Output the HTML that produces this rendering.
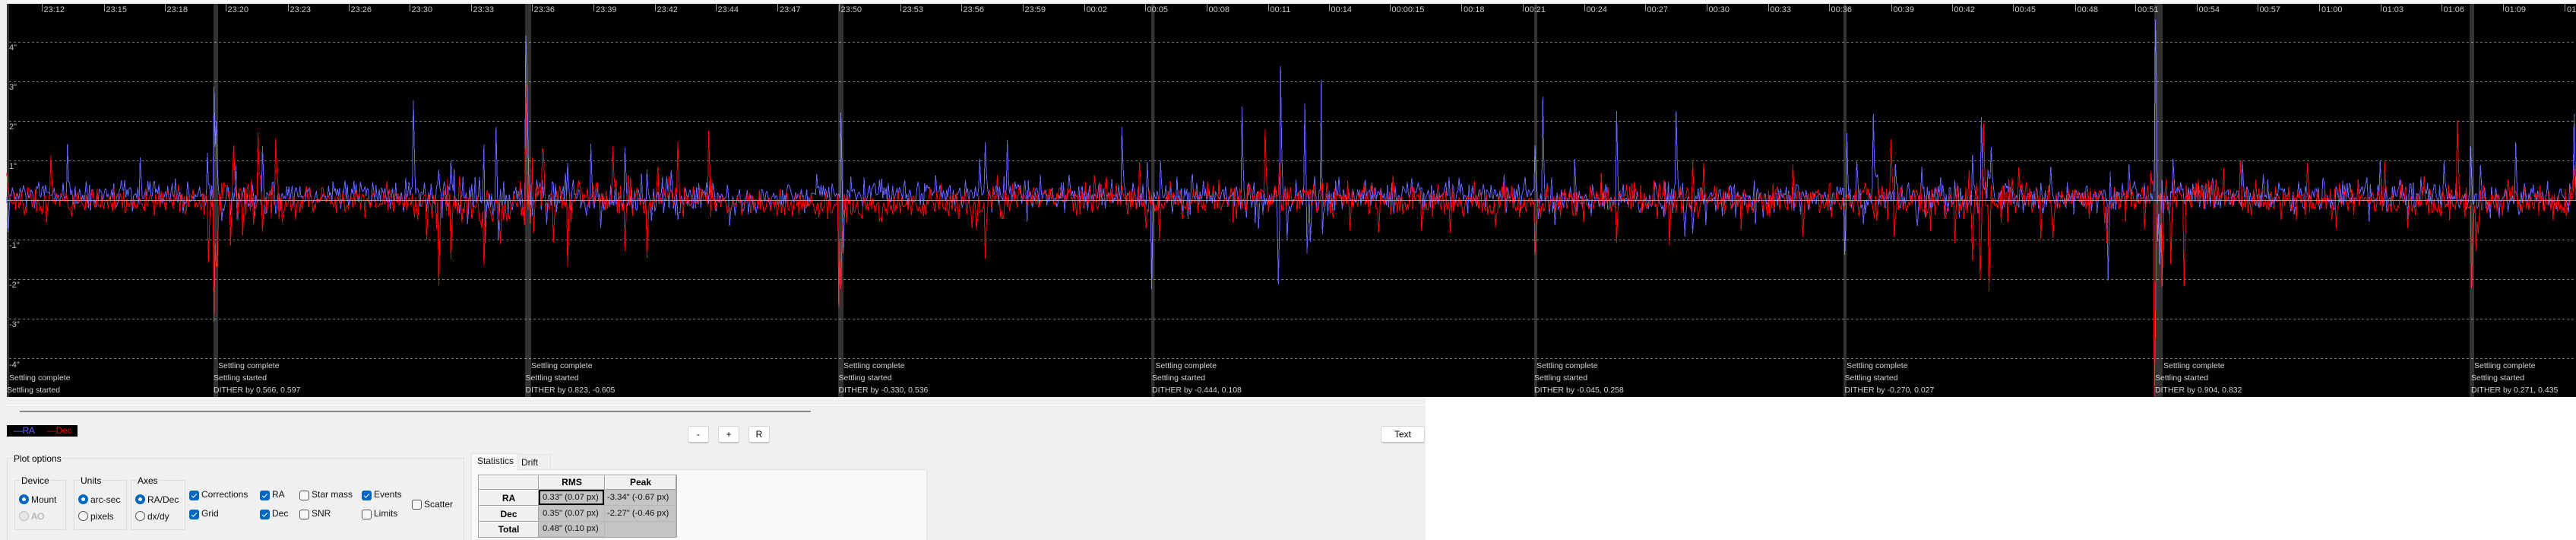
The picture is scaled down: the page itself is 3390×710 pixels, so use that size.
<!DOCTYPE html>
<html>
<head>
<meta charset="utf-8">
<title>Guide graph</title>
<style>
html,body{margin:0;padding:0;background:#fff;width:3390px;height:710px;overflow:hidden;}
body{font-family:"Liberation Sans",sans-serif;font-size:12px;color:#000;}
div,span{position:absolute;white-space:nowrap;box-sizing:border-box;}
#root{left:0;top:0;width:3390px;height:710px;overflow:hidden;background:#fff;}
#top{left:0;top:0;width:3390px;height:5px;background:#f8f8f8;}
#leftedge{left:0;top:0;width:9px;height:522px;background:#f0f0f0;}
#plot{left:9px;top:5px;width:3381px;height:517px;background:#000;}
#panel{left:0;top:522px;width:1876px;height:188px;background:#f0f0f0;}
svg{position:absolute;left:0;top:0;}
.t{top:7px;height:13px;line-height:13px;font-size:11px;color:#c8c8c8;}
.k{top:5px;width:1px;height:10px;background:#a0a0a0;}
.y{left:12px;height:13px;line-height:13px;font-size:11px;color:#c8c8c8;}
.e{height:13px;line-height:13px;font-size:10.5px;color:#d4d4d4;}
.btn{top:560px;height:23px;background:#fff;border:1px solid #d4d4d4;border-bottom:2px solid #c4c4c4;border-radius:3px;text-align:center;line-height:20px;font-size:12px;}
.grp{border:1px solid #dcdcdc;}
.lg{background:#f0f0f0;height:14px;line-height:14px;font-size:12px;padding:0 1px;}
.l{height:16px;line-height:16px;font-size:12px;color:#111;}
.cb{width:13px;height:13px;border-radius:3px;background:#0067c0;}
.cb svg{left:0;top:0;}
.cu{width:13px;height:13px;border-radius:3px;background:#f7f7f7;border:1px solid #555;}
.r{width:13px;height:13px;border-radius:50%;background:#0067c0;}
.r:after{content:"";position:absolute;left:4px;top:4px;width:5px;height:5px;border-radius:50%;background:#fff;}
.ru{width:13px;height:13px;border-radius:50%;background:#f5f5f5;border:1px solid #555;}
.hd{background:#f0f0f0;border-right:1px solid #a0a0a0;border-bottom:1px solid #a0a0a0;border-left:1px solid #fff;border-top:1px solid #fff;text-align:center;font-weight:bold;font-size:12px;}
.c{background:#c4c4c4;border-right:1px solid #b6b6b6;border-bottom:1px solid #b6b6b6;font-size:11.3px;color:#111;}
</style>
</head>
<body>
<div id="root">
<div id="top"></div>
<div id="leftedge"></div>
<div id="plot"></div>
<svg id="chart" width="3390" height="710" viewBox="0 0 3390 710"></svg>

<div class="k" style="left:55px"></div><div class="t" style="left:57.5px">23:12</div>
<div class="k" style="left:137px"></div><div class="t" style="left:139.5px">23:15</div>
<div class="k" style="left:217px"></div><div class="t" style="left:219.5px">23:18</div>
<div class="k" style="left:297px"></div><div class="t" style="left:299.5px">23:20</div>
<div class="k" style="left:379px"></div><div class="t" style="left:381.5px">23:23</div>
<div class="k" style="left:459px"></div><div class="t" style="left:461.5px">23:26</div>
<div class="k" style="left:539px"></div><div class="t" style="left:541.5px">23:30</div>
<div class="k" style="left:620px"></div><div class="t" style="left:622.5px">23:33</div>
<div class="k" style="left:700px"></div><div class="t" style="left:702.5px">23:36</div>
<div class="k" style="left:781px"></div><div class="t" style="left:784px">23:39</div>
<div class="k" style="left:862px"></div><div class="t" style="left:864.5px">23:42</div>
<div class="k" style="left:942px"></div><div class="t" style="left:944.5px">23:44</div>
<div class="k" style="left:1023px"></div><div class="t" style="left:1026px">23:47</div>
<div class="k" style="left:1104px"></div><div class="t" style="left:1106.5px">23:50</div>
<div class="k" style="left:1185px"></div><div class="t" style="left:1187.5px">23:53</div>
<div class="k" style="left:1265px"></div><div class="t" style="left:1267.5px">23:56</div>
<div class="k" style="left:1346px"></div><div class="t" style="left:1348.5px">23:59</div>
<div class="k" style="left:1427px"></div><div class="t" style="left:1429.5px">00:02</div>
<div class="k" style="left:1507px"></div><div class="t" style="left:1509.5px">00:05</div>
<div class="k" style="left:1588px"></div><div class="t" style="left:1590.5px">00:08</div>
<div class="k" style="left:1669px"></div><div class="t" style="left:1671.5px">00:11</div>
<div class="k" style="left:1749px"></div><div class="t" style="left:1751.5px">00:14</div>
<div class="k" style="left:1829px"></div><div class="t" style="left:1831.5px">00:00:15</div>
<div class="k" style="left:1923px"></div><div class="t" style="left:1926px">00:18</div>
<div class="k" style="left:2004px"></div><div class="t" style="left:2006.5px">00:21</div>
<div class="k" style="left:2085px"></div><div class="t" style="left:2087.5px">00:24</div>
<div class="k" style="left:2165px"></div><div class="t" style="left:2167.5px">00:27</div>
<div class="k" style="left:2246px"></div><div class="t" style="left:2248.5px">00:30</div>
<div class="k" style="left:2327px"></div><div class="t" style="left:2329.5px">00:33</div>
<div class="k" style="left:2407px"></div><div class="t" style="left:2409.5px">00:36</div>
<div class="k" style="left:2489px"></div><div class="t" style="left:2491.5px">00:39</div>
<div class="k" style="left:2569px"></div><div class="t" style="left:2571.5px">00:42</div>
<div class="k" style="left:2649px"></div><div class="t" style="left:2651.5px">00:45</div>
<div class="k" style="left:2731px"></div><div class="t" style="left:2733.5px">00:48</div>
<div class="k" style="left:2810px"></div><div class="t" style="left:2813px">00:51</div>
<div class="k" style="left:2891px"></div><div class="t" style="left:2893.5px">00:54</div>
<div class="k" style="left:2971px"></div><div class="t" style="left:2973.5px">00:57</div>
<div class="k" style="left:3052px"></div><div class="t" style="left:3055px">01:00</div>
<div class="k" style="left:3133px"></div><div class="t" style="left:3135.5px">01:03</div>
<div class="k" style="left:3213px"></div><div class="t" style="left:3215.5px">01:06</div>
<div class="k" style="left:3294px"></div><div class="t" style="left:3296.5px">01:09</div>
<div class="k" style="left:3375px"></div><div class="t" style="left:3378px">01:12</div>

<div class="y" style="top:57px">4"</div>
<div class="y" style="top:109px">3"</div>
<div class="y" style="top:161px">2"</div>
<div class="y" style="top:213px">1"</div>
<div class="y" style="top:317px">-1"</div>
<div class="y" style="top:369px">-2"</div>
<div class="y" style="top:421px">-3"</div>
<div class="y" style="top:474px">-4"</div>

<div class="e" style="left:12px;top:491px">Settling complete</div>
<div class="e" style="left:9px;top:507px">Settling started</div>
<div class="e" style="left:287px;top:475px">Settling complete</div>
<div class="e" style="left:281px;top:491px">Settling started</div>
<div class="e" style="left:281px;top:507px">DITHER by 0.566, 0.597</div>
<div class="e" style="left:699px;top:475px">Settling complete</div>
<div class="e" style="left:691.5px;top:491px">Settling started</div>
<div class="e" style="left:691.5px;top:507px">DITHER by 0.823, -0.605</div>
<div class="e" style="left:1110px;top:475px">Settling complete</div>
<div class="e" style="left:1103.5px;top:491px">Settling started</div>
<div class="e" style="left:1103.5px;top:507px">DITHER by -0.330, 0.536</div>
<div class="e" style="left:1520.5px;top:475px">Settling complete</div>
<div class="e" style="left:1516px;top:491px">Settling started</div>
<div class="e" style="left:1516px;top:507px">DITHER by -0.444, 0.108</div>
<div class="e" style="left:2022px;top:475px">Settling complete</div>
<div class="e" style="left:2019px;top:491px">Settling started</div>
<div class="e" style="left:2019px;top:507px">DITHER by -0.045, 0.258</div>
<div class="e" style="left:2430px;top:475px">Settling complete</div>
<div class="e" style="left:2427.5px;top:491px">Settling started</div>
<div class="e" style="left:2427.5px;top:507px">DITHER by -0.270, 0.027</div>
<div class="e" style="left:2847px;top:475px">Settling complete</div>
<div class="e" style="left:2836px;top:491px">Settling started</div>
<div class="e" style="left:2836px;top:507px">DITHER by 0.904, 0.832</div>
<div class="e" style="left:3256px;top:475px">Settling complete</div>
<div class="e" style="left:3252px;top:491px">Settling started</div>
<div class="e" style="left:3252px;top:507px">DITHER by 0.271, 0.435</div>

<div id="panel"></div>
<div style="left:9px;top:532px;width:1867px;height:1px;background:#fff"></div>
<div style="left:26px;top:540px;width:1041px;height:2px;background:#8a8a8a"></div>

<div style="left:9px;top:559px;width:93px;height:15px;background:#000"></div>
<div style="left:18px;top:559px;height:15px;line-height:15px;font-size:12px;color:#6464ff;letter-spacing:-.4px">—RA</div>
<div style="left:62px;top:559px;height:15px;line-height:15px;font-size:12px;color:#f00;letter-spacing:-.4px">—Dec</div>

<div class="btn" style="left:905px;width:28px">-</div>
<div class="btn" style="left:945px;width:28px">+</div>
<div class="btn" style="left:985px;width:28px">R</div>
<div class="btn" style="left:1817px;width:58px">Text</div>

<div class="grp" style="left:9px;top:602px;width:602px;height:130px"></div>
<div class="lg" style="left:17px;top:596px">Plot options</div>

<div class="grp" style="left:19px;top:631px;width:68px;height:66px"></div>
<div class="lg" style="left:27px;top:625px">Device</div>
<div class="grp" style="left:97px;top:631px;width:70px;height:66px"></div>
<div class="lg" style="left:105px;top:625px">Units</div>
<div class="grp" style="left:172px;top:631px;width:72px;height:66px"></div>
<div class="lg" style="left:180px;top:625px">Axes</div>

<div class="r" style="left:25px;top:650px"></div><div class="l" style="left:41px;top:649px">Mount</div>
<div class="ru" style="left:25px;top:672px;border-color:#bbb;background:#e6e6e6"></div><div class="l" style="left:41px;top:671px;color:#a0a0a0">AO</div>
<div class="r" style="left:103px;top:650px"></div><div class="l" style="left:119px;top:649px">arc-sec</div>
<div class="ru" style="left:103px;top:672px"></div><div class="l" style="left:119px;top:671px">pixels</div>
<div class="r" style="left:178px;top:650px"></div><div class="l" style="left:194px;top:649px">RA/Dec</div>
<div class="ru" style="left:178px;top:672px"></div><div class="l" style="left:194px;top:671px">dx/dy</div>

<div class="cb" style="left:249px;top:645px"><svg width="13" height="13"><path d="M3.2 6.8 L5.4 9 L9.8 4.4" fill="none" stroke="#fff" stroke-width="1"/></svg></div><div class="l" style="left:265px;top:642px">Corrections</div>
<div class="cb" style="left:249px;top:670px"><svg width="13" height="13"><path d="M3.2 6.8 L5.4 9 L9.8 4.4" fill="none" stroke="#fff" stroke-width="1"/></svg></div><div class="l" style="left:265px;top:667px">Grid</div>
<div class="cb" style="left:342px;top:645px"><svg width="13" height="13"><path d="M3.2 6.8 L5.4 9 L9.8 4.4" fill="none" stroke="#fff" stroke-width="1"/></svg></div><div class="l" style="left:358px;top:642px">RA</div>
<div class="cb" style="left:342px;top:670px"><svg width="13" height="13"><path d="M3.2 6.8 L5.4 9 L9.8 4.4" fill="none" stroke="#fff" stroke-width="1"/></svg></div><div class="l" style="left:358px;top:667px">Dec</div>
<div class="cu" style="left:394px;top:645px"></div><div class="l" style="left:410px;top:642px">Star mass</div>
<div class="cu" style="left:394px;top:670px"></div><div class="l" style="left:410px;top:667px">SNR</div>
<div class="cb" style="left:476px;top:645px"><svg width="13" height="13"><path d="M3.2 6.8 L5.4 9 L9.8 4.4" fill="none" stroke="#fff" stroke-width="1"/></svg></div><div class="l" style="left:492px;top:642px">Events</div>
<div class="cu" style="left:476px;top:670px"></div><div class="l" style="left:492px;top:667px">Limits</div>
<div class="cu" style="left:542px;top:657px"></div><div class="l" style="left:558px;top:655px">Scatter</div>

<div style="left:620px;top:617px;width:600px;height:100px;background:#f9f9f9;border:1px solid #e2e2e2"></div>
<div style="left:681px;top:597px;width:44px;height:21px;background:#f0f0f0;border:1px solid #e2e2e2"></div>
<div style="left:620px;top:596px;width:62px;height:22px;background:#f9f9f9;border:1px solid #e2e2e2;border-bottom:0"></div>
<div class="l" style="left:628px;top:598px">Statistics</div>
<div class="l" style="left:686px;top:600px">Drift</div>

<div style="left:629px;top:624px;width:262px;height:83px;background:#c4c4c4;border:1px solid #a0a0a0"></div>
<div class="hd" style="left:630px;top:625px;width:79px;height:19px"></div>
<div class="hd" style="left:709px;top:625px;width:87px;height:19px;line-height:17px">RMS</div>
<div class="hd" style="left:796px;top:625px;width:94px;height:19px;line-height:17px">Peak</div>
<div class="hd" style="left:630px;top:644px;width:79px;height:21px;line-height:20px">RA</div>
<div class="hd" style="left:630px;top:665px;width:79px;height:21px;line-height:20px">Dec</div>
<div class="hd" style="left:630px;top:686px;width:79px;height:20px;line-height:19px;border-bottom:0">Total</div>
<div class="c" style="left:709px;top:644px;width:87px;height:21px"></div>
<div class="c" style="left:796px;top:644px;width:94px;height:21px;line-height:20px;padding-left:3px">-3.34" (-0.67 px)</div>
<div class="c" style="left:709px;top:665px;width:87px;height:21px;line-height:20px;padding-left:5px">0.35" (0.07 px)</div>
<div class="c" style="left:796px;top:665px;width:94px;height:21px;line-height:20px;padding-left:3px">-2.27" (-0.46 px)</div>
<div class="c" style="left:709px;top:686px;width:87px;height:20px;line-height:19px;padding-left:5px">0.48" (0.10 px)</div>
<div class="c" style="left:796px;top:686px;width:94px;height:20px;border-bottom:0"></div>
<div style="left:709px;top:644px;width:86px;height:20px;border:2px solid #000;background:#c4c4c4;line-height:16px;padding-left:3px;font-size:11.3px;color:#111">0.33" (0.07 px)</div>
</div>

<script>
(function(){
var NS="http://www.w3.org/2000/svg",svg=document.getElementById("chart");
function add(tag,attrs){var e=document.createElementNS(NS,tag);for(var k in attrs)e.setAttribute(k,attrs[k]);svg.appendChild(e);return e;}
var seed=12345;
function rnd(){seed|=0;seed=seed+0x6D2B79F5|0;var t=Math.imul(seed^seed>>>15,1|seed);t=t+Math.imul(t^t>>>7,61|t)^t;return((t^t>>>14)>>>0)/4294967296;}
function gauss(){return Math.sqrt(-2*Math.log(rnd()+1e-9))*Math.cos(6.2832*rnd());}
var grid=[55,107,159,211,315,367,419,471];
grid.forEach(function(y){add("line",{x1:12,x2:3390,y1:y+.5,y2:y+.5,stroke:"#7c7c7c","stroke-width":1,"stroke-dasharray":"3 3","shape-rendering":"crispEdges"});});
var seg=[[280,3,0,11],[370,0,5,17],[570,5,0,10],[720,0,-3,17],[940,0,3,14],[1020,-1,-3,10],[1100,6,-6,10],[1300,6,-6,11],[1500,5,3,13],[1640,2,0,12],[1760,0,3,15],[2020,4,-1,12],[2430,1,0,13],[2640,2,0,15],[2836,1,2,13],[2950,1,9,13],[3230,3,0,13],[3390,1,-1,13]];
function params(x){for(var i=0;i<seg.length;i++)if(x<seg[i][0])return seg[i];return seg[seg.length-1];}
var step=1.45,n=Math.ceil((3390-9)/step)+1,K=.88;
function series(which,off){var a=[];for(var i=0;i<n;i++){var x=9+i*step,p=params(x);a.push(263-(p[which]+off+gauss()*p[3]*K));}return a;}
var B=series(1,2),R=series(2,-1);
function spike(a,list){list.forEach(function(s){var i=Math.round((s[0]-9)/step);if(i<0||i>=n)return;a[i]=s[1];if(i+1<n)a[i+1]=263+(s[1]-263)*(.3+rnd()*.2);});}
spike(B,[[10,305],[89,189],[184,207],[273,201],[282,114],[284,160],[346,192],[544,132],[593,211],[577,223],[594,211],[637,190],[653,167],[692,47],[693,90],[778,189],[747,214],[822,194],[852,223],[1106,148],[1120,232],[1289,209],[1296,187],[1325,184],[1477,167],[1510,213],[1527,211],[1635,140],[1685,87],[1694,162],[1717,136],[1724,104],[1739,105],[2020,191],[2031,127],[2073,209],[2127,146],[2206,146],[2431,175],[2444,211],[2465,150],[2494,216],[2529,219],[2596,203],[2607,154],[2621,193],[2699,219],[2776,185],[2802,216],[2836,26],[2838,107],[2844,206],[2859,209],[2951,211],[3133,211],[3217,211],[3251,192],[3264,217],[3310,187],[3387,150],
[638,320],[655,315],[790,300],[960,297],[1110,333],[1516,380],[1683,374],[1694,315],[1720,333],[1724,318],[1740,308],[2046,296],[2217,311],[2228,307],[2427,335],[2774,369],[2839,317],[2842,348]]);
spike(R,[[9,227],[67,204],[308,191],[340,174],[363,182],[692,110],[700,207],[714,196],[715,196],[806,193],[892,186],[933,172],[1499,213],[1665,170],[1684,213],[1833,231],[2227,213],[2242,214],[2360,216],[2489,183],[2611,162],[2657,220],[2948,211],[3036,214],[3138,212],[3234,158],[3387,217],
[274,345],[282,423],[284,350],[286,350],[303,323],[320,310],[346,305],[562,315],[577,375],[593,341],[637,349],[659,321],[702,307],[728,319],[747,351],[822,330],[852,339],[1104,403],[1106,380],[1108,317],[1160,292],[1279,300],[1285,302],[1297,340],[1509,300],[1526,314],[1777,303],[1814,306],[1871,303],[1908,306],[1968,299],[2020,335],[2128,319],[2197,323],[2373,311],[2493,311],[2572,320],[2596,343],[2606,367],[2617,383],[2685,314],[2702,313],[2773,320],[2822,302],[2835,522],[2836,522],[2837,430],[2845,377],[2857,348],[2874,376],[3002,289],[3075,300],[3169,300],[3252,379],[3258,330],[3261,307]]);
function draw(a,c){var d="";for(var i=0;i<n;i++){var x=9+i*step,y=Math.max(5,Math.min(522,a[i]));d+=(i?"L":"M")+x.toFixed(1)+" "+y.toFixed(1);}
add("path",{d:d,fill:"none",stroke:c,"stroke-width":1,"stroke-linejoin":"miter","stroke-miterlimit":1,"shape-rendering":"crispEdges"});}
draw(B,"#6464ff");draw(R,"#ff0000");
add("rect",{x:9,y:263,width:3381,height:1,fill:"#a0a0a0"});
[[9,3],[281,6],[691,8],[1103,7],[1515,4.5],[2019,4],[2426,4],[2835,11],[3250,6]].forEach(function(b){add("rect",{x:b[0],y:5,width:b[1],height:517,fill:"rgba(255,255,255,.2)"});});
})();
</script>
</body>
</html>
